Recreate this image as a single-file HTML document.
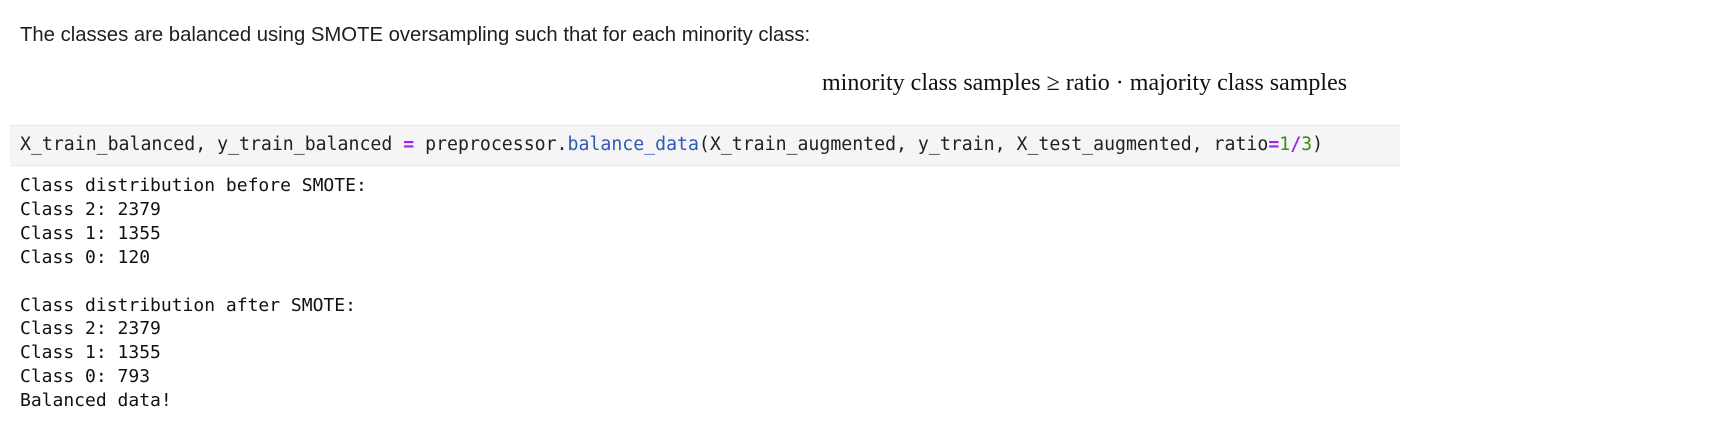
<!DOCTYPE html>
<html><head><style>
body{margin:0;width:1730px;height:432px;background:#fff;position:relative;overflow:hidden}
.p{position:absolute;left:20px;top:24px;font:20.3px "Liberation Sans",sans-serif;color:#1f1f1f}
.m{position:absolute;left:822px;top:70px;font:24px "Liberation Serif",serif;color:#111;white-space:nowrap}
.code{position:absolute;left:10px;top:125px;width:1390px;height:39px;background:#f5f5f5;border-top:1px solid #e8e8e8;border-bottom:1px solid #e8e8e8}
.code pre{margin:0;position:absolute;left:10px;top:8px;font:18.2px "DejaVu Sans Mono",monospace;color:#212121}
.out{position:absolute;left:20px;top:174px;margin:0;font:18px/23.9px "DejaVu Sans Mono",monospace;color:#111}
.b{color:#2f58b8}.o{color:#a020f0;font-weight:bold}.n{color:#3c8c1c}
</style></head><body>
<div class="p">The classes are balanced using SMOTE oversampling such that for each minority class:</div>
<div class="m">minority class samples ≥ ratio · majority class samples</div>
<div class="code"><pre>X_train_balanced, y_train_balanced <span class="o">=</span> preprocessor.<span class="b">balance_data</span>(X_train_augmented, y_train, X_test_augmented, ratio<span class="o">=</span><span class="n">1</span><span class="o">/</span><span class="n">3</span>)</pre></div>
<pre class="out">Class distribution before SMOTE:
Class 2: 2379
Class 1: 1355
Class 0: 120

Class distribution after SMOTE:
Class 2: 2379
Class 1: 1355
Class 0: 793
Balanced data!</pre>
</body></html>
